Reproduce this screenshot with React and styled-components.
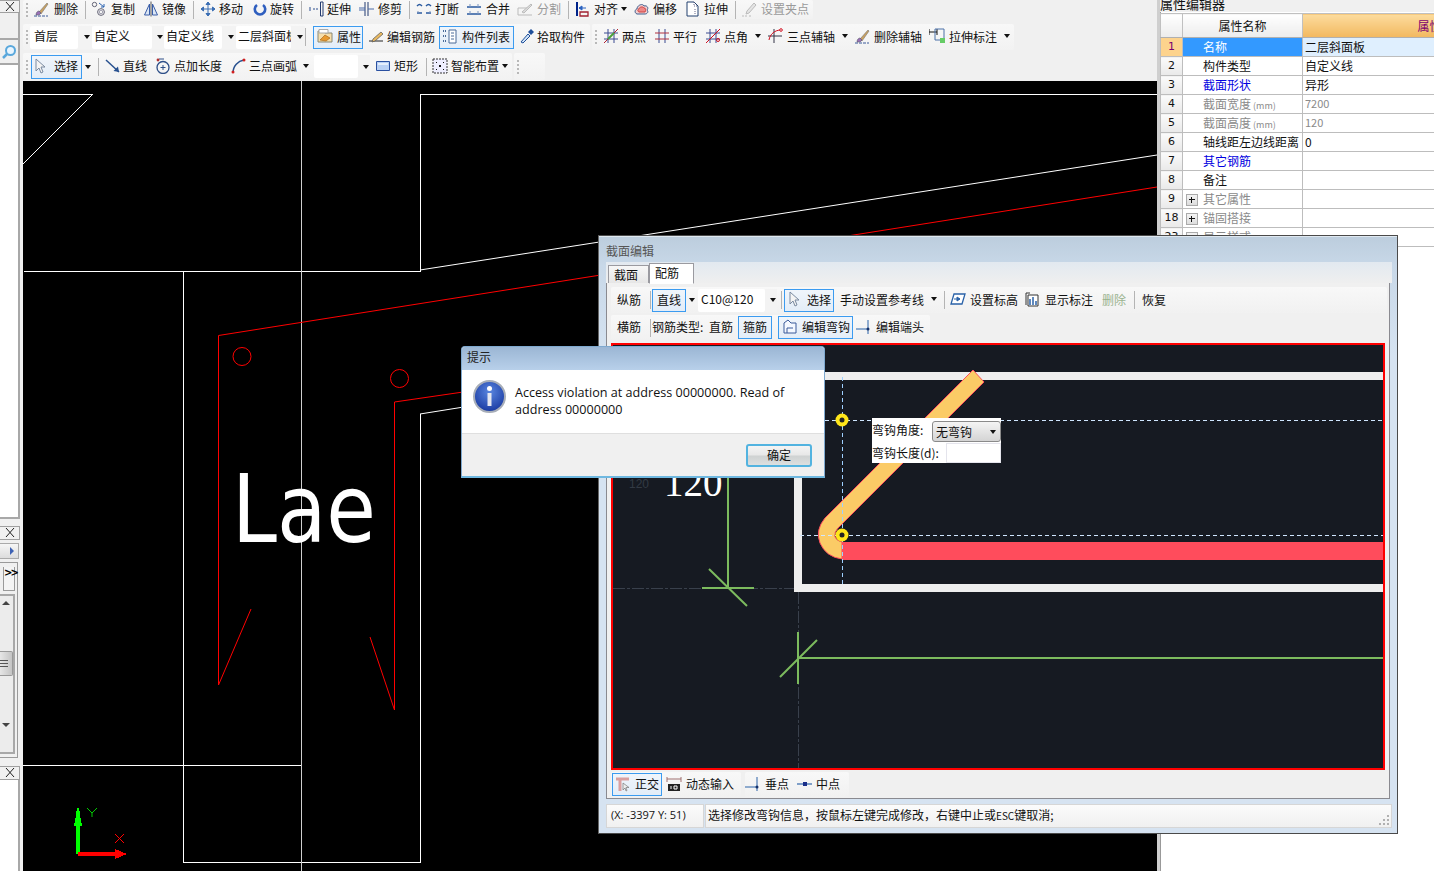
import React from "react";
import styled, { createGlobalStyle } from "styled-components";

const Global = createGlobalStyle`
  html, body { margin: 0; padding: 0; background: #f0f0f0; overflow: hidden; }
  body { font-family: "Noto Sans CJK SC", "Liberation Sans", sans-serif; font-size: 12px; color: #111; }
  * { box-sizing: border-box; }
`;

const Page = styled.div`
  position: relative; width: 1434px; height: 871px; display: flex; overflow: hidden; background: #f0f0f0;
`;

/* ---------- left dock strip ---------- */
const LeftStrip = styled.aside`
  width: 23px; flex: none; display: flex; flex-direction: column; background: #f0f0f0;
`;
const StripPane = styled.div`
  width: 20px; flex: none; height: ${p => p.$h}px; margin-top: ${p => p.$mt || 0}px;
  background: ${p => p.$bg || "#fff"}; border-right: 2px solid #a8a8a8;
  border-bottom: ${p => (p.$line ? "2px solid #a8a8a8" : "0")};
  display: flex; align-items: center; justify-content: center;
`;
const CloseBtn = styled.div`
  width: 20px; height: ${p => p.$h || 14}px; flex: none; margin-top: ${p => p.$mt || 0}px;
  border: 1px solid #a0a0a0; border-left: 0; background: #f1f1f1;
  display: flex; align-items: center; justify-content: center;
`;
const ArrowBtn = styled.div`
  width: 19px; height: 16px; flex: none; margin-top: 3px; background: linear-gradient(#f6f6f6, #dcdcdc);
  border: 1px solid #aaa; border-left: 0; display: flex; align-items: center; justify-content: flex-end; padding-right: 4px;
  &::after { content: ""; border-left: 4px solid #3e62b4; border-top: 4px solid transparent; border-bottom: 4px solid transparent; }
`;
const ScrollDock = styled.div`
  width: 18px; height: 196px; flex: none; margin-top: 3px; border: 1px solid #9a9a9a; border-left: 0;
  background: #f0f0f0; display: flex; flex-direction: column; padding: 4px 2px 3px 0;
`;
const MoreBtn = styled.div`
  width: 12px; height: 24px; margin-left: 3px; flex: none; border: 1px solid #9a9a9a; border-top: 0; background: #f4f4f4;
  font: 700 10px/12px "DejaVu Sans", sans-serif; letter-spacing: -2px; color: #000; text-align: center;
`;
const ScrollTrack = styled.div`
  flex: 1; margin-top: 3px; border: 2px solid #a8a8a8; border-left: 0; background: #ececec;
  display: flex; flex-direction: column; align-items: center; position: relative;
`;
const ScrollThumb = styled.div`
  position: absolute; top: 55px; left: 0; width: 13px; height: 25px; border: 1px solid #999; border-left: 0; border-radius: 0 2px 2px 0;
  background: linear-gradient(90deg, #e6e6e6, #c4c4c4);
  display: flex; flex-direction: column; gap: 2px; justify-content: center; align-items: flex-start;
  i { display: block; width: 8px; height: 1px; background: #555; }
`;
const ScrollTri = styled.div`
  position: absolute; left: 2px; top: ${p => p.$top}px; width: 0; height: 0;
  border-left: 4px solid transparent; border-right: 4px solid transparent;
  ${p => (p.$up ? "border-bottom: 4px solid #444;" : "border-top: 4px solid #444;")}
`;

/* ---------- centre ---------- */
const Centre = styled.main`
  width: 1134px; flex: none; display: flex; flex-direction: column;
`;
const Toolbars = styled.div`
  height: 81px; flex: none; display: flex; flex-direction: column;
`;
const BarLine = styled.div`
  display: flex; gap: 2px; height: ${p => p.$h}px; margin-top: ${p => p.$mt || 0}px; flex: none;
`;
const Bar = styled.div`
  display: flex; align-items: center; height: 100%; width: ${p => (p.$w ? `${p.$w}px` : "auto")}; flex: none;
  background: linear-gradient(#f8f8f8, #f2f2f2); border-radius: 2px;
`;
const Grip = styled.div`
  width: ${p => p.$w}px; height: 14px; flex: none; position: relative;
  &::before { content: ""; position: absolute; left: ${p => p.$at || 3}px; top: 0; bottom: 0; border-left: 2px dotted #b8b8b8; }
`;
const Tool = styled.div`
  display: flex; align-items: center; flex: none; width: ${p => p.$w}px; height: 100%; white-space: nowrap; padding-bottom: 2px;
  color: ${p => (p.$muted ? "#9a9a9a" : "#111")};
`;
const IconSlot = styled.span`
  display: flex; flex: none; width: ${p => p.$w}px; align-items: center;
`;
const Glyph = styled.svg`
  display: block; width: 16px; height: 16px; flex: none;
`;
const Caret = styled.span`
  flex: none; width: 0; height: 0; margin-left: ${p => p.$ml || 3}px; margin-right: ${p => p.$mr || 0}px;
  border-left: 3px solid transparent; border-right: 3px solid transparent; border-top: 4px solid #111;
`;
const Sep = styled.div`
  flex: none; width: ${p => p.$w}px; height: 18px; position: relative;
  &::before { content: ""; position: absolute; left: 0; top: 0; bottom: 0; width: 1px; background: #b4b4b4; }
`;
const ActiveBtn = styled.button`
  display: flex; align-items: center; flex: none; width: ${p => p.$w}px; height: ${p => p.$h || 23}px; padding: 0 0 2px ${p => p.$pl ?? 4}px;
  margin: 0 ${p => p.$mr || 0}px 0 ${p => p.$ml || 0}px; font: inherit; color: #111; white-space: nowrap; overflow: hidden;
  background: linear-gradient(#f0f5fb, #e3edf8); border: 1px solid #3b9bf0; border-radius: 0;
`;
const SelectBox = styled.div`
  display: flex; align-items: center; flex: none; width: ${p => p.$w}px; height: 23px; padding-right: 0; margin-right: ${p => p.$mr || 0}px;
`;
const SelectText = styled.div`
  flex: none; width: ${p => p.$w}px; height: 100%; background: #fff; padding-left: ${p => p.$pl ?? 3}px; line-height: 20px;
  overflow: hidden; white-space: nowrap; border-radius: 2px;
`;
const SelectCaret = styled.div`
  flex: 1; height: 100%; display: flex; align-items: center; justify-content: center; background: #f3f3f3;
`;

const Canvas = styled.div`
  flex: 1; background: #000; position: relative; overflow: hidden;
`;
const Cad = styled.svg`
  display: block; width: 100%; height: 100%;
`;

/* ---------- property panel ---------- */
const Panel = styled.aside`
  width: 277px; flex: none; background: #fff; border-left: 3px solid #cfcfcf; overflow: hidden; position: relative;
  box-shadow: inset 1px 0 0 #999;
`;
const PanelHead = styled.div`
  height: 12px; margin-left: 0; background: #f0f0f0; font-size: 13px; line-height: 8px; color: #111; padding-left: 0; white-space: nowrap; overflow: hidden;
`;
const PropTable = styled.table`
  border-collapse: collapse; table-layout: fixed; width: 409px; margin: 1px 0 0 0; border: 1px solid #a4a4a4; font-size: 12px;
`;
const Th = styled.th`
  height: 24px; padding: 0; font-weight: 400; width: ${p => (p.$w ? `${p.$w}px` : "auto")};
  border: 1px solid #c0c0c0; border-bottom-color: #b0b0b0;
  background: ${p => (p.$hot ? "linear-gradient(#fcdc9e, #f2b85f)" : "linear-gradient(#fff, #ececec)")};
  color: ${p => (p.$hot ? "#7a0070" : "#111")};
`;
const Tr = styled.tr` height: 19px; `;
const CellFit = styled.div`
  height: 18px; line-height: 17px; overflow: hidden;
`;
const IndexCell = styled.td`
  padding: 0; text-align: center; border: 1px solid #bdbdbd; font: 11px/17px "DejaVu Sans", sans-serif;
  background: ${p => (p.$on ? "#fdd38d" : "linear-gradient(#fbfbfb, #e9e9e9)")}; color: ${p => (p.$on ? "#7a0070" : "#111")};
`;
const NameCell = styled.td`
  padding: 0 0 0 ${p => (p.$exp ? 3 : 20)}px; border: 1px solid #bdbdbd; white-space: nowrap; overflow: hidden;
  background: ${p => (p.$on ? "#3399ff" : "#fff")};
  color: ${p => (p.$on ? "#fff" : p.$tone === "blue" ? "#0000e0" : p.$tone === "grey" ? "#8a8a8a" : "#111")};
`;
const ValueCell = styled.td`
  padding: 0 0 0 2px; border: 1px solid #bdbdbd; white-space: nowrap;
  font-size: ${p => (p.$tone === "grey" ? "11px" : "12px")};
  background: ${p => (p.$on ? "#dfeffe" : "#fff")}; color: ${p => (p.$tone === "grey" ? "#8a8a8a" : "#111")};
`;
const Unit = styled.span` font-size: 9px; margin-left: 2px; `;
const ExpandBox = styled.span`
  display: inline-block; width: 12px; height: 12px; margin-right: 5px; vertical-align: -2px;
  border: 1px solid #aaa; background: linear-gradient(#f4f4f4, #ddd); position: relative;
  &::before { content: ""; position: absolute; left: 2px; right: 2px; top: 4px; height: 1px; background: #111; }
  &::after { content: ""; position: absolute; top: 2px; bottom: 2px; left: 4px; width: 1px; background: #111; }
`;

/* ---------- section editor window ---------- */
const SectionWindow = styled.section`
  position: absolute; left: 598px; top: 235px; width: 800px; height: 599px; display: flex; flex-direction: column;
  background: linear-gradient(#bccddd 0, #c8d8e8 30px, #d6e3f1 120px); border: 1px solid #4a4a4a; border-left-color: #666; padding: 0 7px 6px 7px;
  box-shadow: inset 0 1px 0 #dfe8f0;
`;
const WinTitle = styled.div`
  height: 26px; flex: none; line-height: 30px; color: #555; font-size: 12px;
`;
const TabStrip = styled.div`
  height: 21px; flex: none; display: flex; align-items: flex-end; padding-left: 2px; background: linear-gradient(#e2e9f0, #efefef); position: relative; z-index: 1; margin-right: -2px;
`;
const Tab = styled.div`
  width: ${p => p.$w}px; height: ${p => (p.$on ? 21 : 18)}px; line-height: ${p => (p.$on ? 17 : 17)}px; padding-left: 5px; flex: none;
  background: ${p => (p.$on ? "#fff" : "linear-gradient(#f7f7f7, #e6e6e6)")};
  border: 1px solid #9a9aa0; border-bottom: ${p => (p.$on ? "1px solid #fff" : "0")}; margin-bottom: ${p => (p.$on ? -1 : 0)}px;
`;
const TabBody = styled.div`
  height: 517px; flex: none; margin-top: -1px; border: 1px solid #8a8a90; background: #f0f0f0; padding: 4px 2px 0 4px; display: flex; flex-direction: column;
`;
const WinBar = styled.div`
  display: flex; align-items: center; height: ${p => p.$h}px; flex: none; width: ${p => (p.$w ? `${p.$w}px` : "auto")};
  background: linear-gradient(#f8f8f8, #f1f1f1); border-radius: 2px; margin-top: ${p => p.$mt || 0}px;
`;
const Spacer = styled.div` flex: none; width: ${p => p.$w}px; `;
const PlainLabel = styled.span`
  flex: none; width: ${p => p.$w}px; white-space: nowrap; padding-bottom: 2px; color: ${p => (p.$tone === "green" ? "#9ab38f" : "#111")};
`;
const RebarCanvas = styled.div`
  position: relative; width: 774px; height: 427px; flex: none; margin-top: 3px; border: 2px solid #f00; background: #161a22;
`;
const RebarSvg = styled.svg` display: block; width: 770px; height: 423px; `;
const HookPopup = styled.div`
  position: absolute; left: 259px; top: 73px; width: 129px; height: 45px; background: #fff; display: grid; grid-template-rows: 24px 21px; font-size: 12px;
`;
const PopRow = styled.div`
  display: flex; align-items: center; justify-content: space-between; white-space: nowrap; line-height: 20px;
`;
const PopSelect = styled.div`
  width: 69px; height: 21px; margin-top: 3px; border: 1px solid #8a8a8a; border-radius: 3px; background: linear-gradient(#f4f4f4, #d4d4d4);
  display: flex; align-items: center; justify-content: space-between; padding: 0 4px 0 3px;
`;
const PopInput = styled.div`
  width: 55px; height: 20px; background: #fff; border: 1px solid #e4e4ec;
`;
const WinFoot = styled.div`
  display: flex; gap: 4px; height: 25px; flex: none; margin-top: 2px;
`;
const StatusLine = styled.div`
  display: flex; gap: 1px; height: 24px; flex: none; margin-top: 5px; margin-right: -2px;
`;
const StatusCell = styled.div`
  position: relative; flex: ${p => (p.$grow ? 1 : "none")}; width: ${p => (p.$w ? `${p.$w}px` : "auto")}; border: 1px solid #d6d6d6; background: linear-gradient(#fbfbfb, #f0f0f0);
  padding-left: ${p => p.$pl}px; line-height: 20px; white-space: nowrap; font-size: ${p => p.$fs || 12}px;
  font-family: ${p => (p.$latin ? '"Open Sans", "Liberation Sans", sans-serif' : "inherit")};
`;
const SmallCaps = styled.span` font-size: 10px; `;
const ResizeDots = styled.svg`
  position: absolute; right: 1px; bottom: 1px; width: 12px; height: 12px;
`;

/* ---------- alert ---------- */
const Alert = styled.section`
  position: absolute; left: 461px; top: 346px; width: 364px; height: 132px; display: flex; flex-direction: column;
  border: 1px solid #7fa9cf; border-bottom: 2px solid #6fb8e0; border-radius: 4px 4px 0 0; background: #f0f0f0; overflow: hidden;
`;
const AlertTitle = styled.div`
  height: 23px; flex: none; background: linear-gradient(#9bb6d4, #b8d0ea); padding-left: 5px; line-height: 20px; color: #222;
`;
const AlertBody = styled.div`
  height: 64px; flex: none; background: #fff; border-bottom: 1px solid #dfdfdf; display: flex; gap: 9px; padding: 10px 30px 0 11px;
`;
const AlertText = styled.p`
  margin: 4px 0 0; font: 12.6px/17px "Open Sans", "Liberation Sans", sans-serif; color: #111;
`;
const AlertFoot = styled.div`
  flex: 1; display: flex; justify-content: flex-end; padding: 10px 12px 0 0;
`;
const OkButton = styled.button`
  width: 66px; height: 23px; border: 2px solid #52b3e0; border-radius: 3px; background: linear-gradient(#f4f4f4 0, #e8e8e8 48%, #cfd2d2 52%, #dcdfdf 100%);
  font: inherit; color: #111; padding: 0 0 2px; line-height: 16px;
`;

/* ---------- icons ---------- */
const paths = {
  brush: <><path d="M1 15h14" stroke="#3a5a9a" strokeWidth="1" strokeDasharray="3 1" /><path d="M6 11 14 2l1 1-7 10z" fill="#c9a060" stroke="#777" strokeWidth=".6" /><path d="M3 14c0-3 2-4 3-4l2 2c-1 2-3 2-5 2z" fill="#9a70b8" stroke="#556" strokeWidth=".6" /></>,
  copy: <><circle cx="3.5" cy="3.5" r="2.2" fill="none" stroke="#667" /><circle cx="10" cy="11" r="3.4" fill="none" stroke="#667" /><circle cx="10" cy="11" r="1.8" fill="none" stroke="#99a" /><path d="M8 2l5 4M13 3v3h-3" fill="none" stroke="#2a62b0" /></>,
  mirror: <><path d="M8 .5v15" stroke="#555" /><path d="M6.5 3 1.5 14h5zM9.5 3l5 11h-5z" fill="#dbe6f5" stroke="#3a5ea8" /></>,
  move: <path d="M8 1v14M1 8h14M8 1 6 3.5h4zM8 15l-2-2.5h4zM1 8l2.5-2v4zM15 8l-2.5-2v4z" fill="#3a6eb4" stroke="#3a6eb4" />,
  rotate: <path d="M5 4a5.2 5.2 0 1 0 6 0" fill="none" stroke="#2f5fbf" strokeWidth="2.6" />,
  extend: <><path d="M1 7h2M1 9h2M5 8h6" stroke="#2d4f90" strokeDasharray="2 1" /><path d="M12.500 1v14M15 1v14M12.500 1H15M12.500 15H15" stroke="#223a70" fill="none" /></>,
  trim: <><path d="M6 1v14M9 1v14" stroke="#223a70" /><path d="M0 7h6M0 9h6M9 8h6" stroke="#4a6aa8" /></>,
  breakAt: <><path d="M1 5c2-2 3-2 5 0M10 5c2-2 3-2 5 0M1 12h5M10 12h5" stroke="#2a5aa0" strokeWidth="1.5" fill="none" /><path d="M2 10v2M14 10v2" stroke="#7b94bf" /></>,
  merge: <><path d="M1 6h14M1 13h14" stroke="#2a5aa0" strokeWidth="1.5" /><path d="M4 3v3M12 3v3M4 10v3M12 10v3" stroke="#7b94bf" /></>,
  split: <><path d="M1 14h14M1 14V7h11" stroke="#bbb" fill="none" /><path d="M5 11 14 3l1 1-8 8z" fill="#ddd" stroke="#bbb" /></>,
  align: <><path d="M2 1v14" stroke="#00238a" strokeWidth="2" /><path d="M5 11h8v4H5z" fill="none" stroke="#a02030" strokeWidth="1.3" /><path d="M4 7h7M4 7l3-2v4z" fill="#2a62c0" stroke="#2a62c0" /></>,
  offset: <><path d="M3 13c-3-1-2-5 0-5 0-4 6-6 7-3 3-1 5 2 3 4 2 2 0 4-2 4z" fill="#f2d0d0" stroke="#406090" /><path d="M5 11c-2-1-1-3 0-3 0-2 4-3 5-1 2 0 2 2 1 4z" fill="#e88" stroke="#c44" /></>,
  stretch: <><path d="M2 1h7l4 4v10H2z" fill="#fff" stroke="#22406e" /><path d="M9 1v4h4M10 8v5" stroke="#668" strokeDasharray="1 1" fill="none" /></>,
  pen: <><path d="M1 15h5M8 15h2" stroke="#bbb" strokeDasharray="2 1" /><path d="M6 10 13 2l2 2-7 8-3 1z" fill="#e4e4e4" stroke="#bbb" /></>,
  prop: <><path d="M1 3h6l1 2h7v9H1z" fill="#f7deaa" stroke="#887" /><path d="M2 1.500h9V5H2z" fill="#fff" stroke="#aaa" /><path d="M3 12 8 7l5 3-4 3z" fill="#e89a30" stroke="#a26010" strokeWidth=".6" /></>,
  editBar: <><path d="M1 13h14" stroke="#222" /><path d="M5 11 13 4l2 2-8 7-3 1z" fill="#e8b860" stroke="#555" strokeWidth=".7" /></>,
  list: <><path d="M8 2h7v13H8z" fill="#fff" stroke="#4a6a98" /><path d="M10 5h3M10 8h3M10 11h3" stroke="#4a6a98" /><path d="M2 3h3M2 8h3M2 13h3" stroke="#4a6a98" strokeWidth="2" strokeDasharray="1 1" /></>,
  dropper: <><path d="M2 14 9 6l2 2-7 7z" fill="#cfe2f7" stroke="#1f4f9a" /><path d="M9 4l3-3 3 3-3 3z" fill="#1f4f9a" /></>,
  twoPt: <><path d="M5 1v14M11 1v14M1 5h14M1 11h14" stroke="#3a4a90" /><path d="M1 15 15 1" stroke="#b02030" /><path d="M5 11l6-6" stroke="#4aa038" strokeWidth="2" /></>,
  parallel: <><path d="M5 1v14M11 1v14" stroke="#3a4a90" /><path d="M1 5h14M1 11h14" stroke="#b03040" /></>,
  corner: <><path d="M5 1v14M11 1v14M1 5h14M1 11h14" stroke="#3a4a90" /><path d="M1 15 15 1" stroke="#d01020" /><circle cx="13" cy="12" r="1.500" fill="none" stroke="#d01020" /></>,
  arcAxis: <><path d="M7 1v14M1 8h14" stroke="#334" /><path d="M2 12C3 6 8 2 14 2" fill="none" stroke="#d01020" /><circle cx="14" cy="2" r="1.300" fill="#fff" stroke="#d01020" /></>,
  dim: <><path d="M0 4h8M0 1v6M8 1v6" stroke="#111" /><path d="M6 1h9v11H6z" fill="none" stroke="#4a70a8" /><path d="M11 10h5v5h-5z" fill="#66cc66" /></>,
  cursor: <path d="M4 1v12l3-3 2 5 2-1-2-5h4z" fill="#f4f4f4" stroke="#7a8aa0" />,
  line: <><path d="M1 2 14 14" stroke="#27508f" strokeWidth="1.500" /><path d="M14 14 8.500 13 13 8.500z" fill="#27508f" /></>,
  lenPlus: <><circle cx="8" cy="9.500" r="6" fill="none" stroke="#2e4f88" strokeWidth="1.300" /><path d="M8 7v5M5.500 9.500h5M4 1h5" stroke="#2e4f88" /><circle cx="3" cy="2" r="1.400" fill="#b03030" /></>,
  arc: <><path d="M2 15C2 8 7 3 13 2" fill="none" stroke="#27508f" strokeWidth="1.500" /><circle cx="2" cy="14" r="1.500" fill="#d02020" /><circle cx="13" cy="2" r="1.500" fill="#d02020" /></>,
  rect: <><path d="M1.500 3.500h13v9h-13z" fill="#b8d0f4" stroke="#2a50a0" /><path d="M3 5h10v2H3z" fill="#e4eefc" /></>,
  smart: <><path d="M1 1h14v14H1z" fill="#eef" stroke="#333" strokeDasharray="2 1" /><path d="M4 4h1v1H4zM11 4h1v1h-1zM4 11h1v1H4zM11 11h1v1h-1zM7 7h2v2H7z" fill="#111" /></>,
  level: <><path d="M4 3h11l-3 10H1z" fill="#fff" stroke="#2a62a8" strokeWidth="1.300" /><path d="M4 8h6M10 8 7 6v4z" fill="#2a62a8" stroke="#2a62a8" /></>,
  label: <><path d="M3 4h10v11H3z" fill="#fff" stroke="#333" /><path d="M5 8v6M8 6v8M11 10v4" stroke="#2a62a8" strokeWidth="1.500" /><path d="M1 14V2M1 2h4" stroke="#333" /></>,
  hook: <><path d="M2 14V4l4-3 3 3h5v10z" fill="#f4f8ff" stroke="#3a5a9a" /><path d="M5 14V9h6" fill="none" stroke="#3a5a9a" /></>,
  endHead: <><path d="M0 10h12M12 1v14" stroke="#2a62a8" /><circle cx="12" cy="10" r="1.500" fill="#14306a" /></>,
  ortho: <><path d="M1 3h13M5 3v12" stroke="#dba0a0" strokeWidth="3" /><path d="M8 7v7l2-2 1 3 1-.5-1-3h3z" fill="#eee" stroke="#777" strokeWidth=".7" /></>,
  dynInput: <><path d="M1 1v5M15 1v5M1 3h14" stroke="#a07070" /><path d="M2 8h12v7H2z" fill="#222" /><path d="M5 10v3M8 10h3v3H8z" stroke="#fff" fill="none" /></>,
  foot: <><path d="M0 11h12M12 1v14" stroke="#2a62a8" /><circle cx="12" cy="11" r="1.500" fill="#14306a" /></>,
  mid: <><path d="M0 8h15" stroke="#7f9fc8" strokeWidth="2" /><path d="M6 6h4v4H6z" fill="#1a2f8a" /></>,
  close: <path d="M4 3l8 9M12 3l-8 9" stroke="#222" />,
  lens: <><circle cx="9.500" cy="6.500" r="4.500" fill="#e8f5ff" stroke="#5aa8dc" strokeWidth="2" /><path d="M6 10l-4 4" stroke="#5aa8dc" strokeWidth="2.500" /></>,
};

const Ico = ({ n }) => <Glyph viewBox="0 0 16 16">{paths[n]}</Glyph>;

const Item = ({ i, t, iw, w, muted, caret }) => (
  <Tool $w={w} $muted={muted}>
    <IconSlot $w={iw}><Ico n={i} /></IconSlot>
    {t}
    {caret ? <Caret $ml={caret} /> : null}
  </Tool>
);

const Active = ({ i, t, w, gap = 5, pl = 4, ...rest }) => (
  <ActiveBtn $w={w} $pl={pl} {...rest}>
    {i ? <IconSlot $w={16 + gap}><Ico n={i} /></IconSlot> : null}
    {t}
  </ActiveBtn>
);

const Select = ({ t, w, tw, pl, mr }) => (
  <SelectBox $w={w} $mr={mr}>
    <SelectText $w={tw} $pl={pl}>{t}</SelectText>
    <SelectCaret><Caret $ml={0} /></SelectCaret>
  </SelectBox>
);

const row1 = [
  ["brush", "删除", 21, 52], 0, ["copy", "复制", 20, 52], ["mirror", "镜像", 19, 50], 1,
  ["move", "移动", 19, 52], ["rotate", "旋转", 18, 49], 1, ["extend", "延伸", 19, 51], ["trim", "修剪", 19, 50], 1,
  ["breakAt", "打断", 19, 50], ["merge", "合并", 20, 51],
];

const rows = [
  { n: 1, name: "名称", val: "二层斜面板", on: true },
  { n: 2, name: "构件类型", val: "自定义线" },
  { n: 3, name: "截面形状", val: "异形", tone: "blue" },
  { n: 4, name: "截面宽度", val: "7200", tone: "grey", unit: true },
  { n: 5, name: "截面高度", val: "120", tone: "grey", unit: true },
  { n: 6, name: "轴线距左边线距离", val: "0" },
  { n: 7, name: "其它钢筋", tone: "blue" },
  { n: 8, name: "备注" },
  { n: 9, name: "其它属性", tone: "grey", exp: true },
  { n: 18, name: "锚固搭接", tone: "grey", exp: true },
  { n: 23, name: "显示样式", tone: "grey", exp: true },
];

export default function App() {
  return (
    <Page>
      <Global />
      <LeftStrip>
        <CloseBtn $h={13}><Ico n="close" /></CloseBtn>
        <StripPane $h={27} $bg="#f0f0f0" $line />
        <StripPane $h={25} $bg="#f0f0f0" $line><Ico n="lens" /></StripPane>
        <StripPane $h={454} $line />
        <CloseBtn $mt={7}><Ico n="close" /></CloseBtn>
        <ArrowBtn />
        <ScrollDock>
          <MoreBtn>&gt;&gt;</MoreBtn>
          <ScrollTrack>
            <ScrollTri $up $top={5} />
            <ScrollThumb><i /><i /><i /></ScrollThumb>
            <ScrollTri $top={127} />
          </ScrollTrack>
        </ScrollDock>
        <CloseBtn $mt={8}><Ico n="close" /></CloseBtn>
        <StripPane $h={91} />
      </LeftStrip>

      <Centre>
        <Toolbars>
          <BarLine $h={19}>
            <Bar $w={790}>
              <Grip $w={10} $at={3} />
              {row1.map((r, k) =>
                typeof r === "number"
                  ? <Sep key={k} $w={r === 0 ? 6 : 7} />
                  : <Item key={k} i={r[0]} t={r[1]} iw={r[2]} w={r[3]} />
              )}
              <Item i="split" t="分割" iw={20} w={51} muted />
              <Sep $w={7} />
              <Item i="align" t="对齐" iw={19} w={59} caret={3} />
              <Item i="offset" t="偏移" iw={19} w={51} />
              <Item i="stretch" t="拉伸" iw={19} w={50} />
              <Sep $w={6} />
              <Item i="pen" t="设置夹点" iw={20} w={72} muted />
            </Bar>
          </BarLine>
          <BarLine $h={26} $mt={5}>
            <Bar $w={567}>
              <Grip $w={7} $at={3} />
              <Select t="首层" w={62} tw={48} pl={4} />
              <Select t="自定义" w={72} tw={60} pl={2} />
              <Select t="自定义线" w={72} tw={58} pl={2} />
              <Select t="二层斜面板" w={69} tw={55} pl={2} />
              <Sep $w={8} />
              <Active i="prop" t="属性" w={50} gap={4} pl={3} />
              <Spacer $w={5} />
              <Item i="editBar" t="编辑钢筋" iw={19} w={71} />
              <Active i="list" t="构件列表" w={75} gap={5} pl={1} />
              <Spacer $w={5} />
              <Item i="dropper" t="拾取构件" iw={18} w={66} />
            </Bar>
            <Bar $w={422}>
              <Grip $w={11} $at={3} />
              <Item i="twoPt" t="两点" iw={19} w={51} />
              <Item i="parallel" t="平行" iw={19} w={51} />
              <Item i="corner" t="点角" iw={19} w={62} caret={7} />
              <Item i="arcAxis" t="三点辅轴" iw={20} w={87} caret={7} />
              <Item i="brush" t="删除辅轴" iw={20} w={75} />
              <Item i="dim" t="拉伸标注" iw={20} w={85} caret={7} />
            </Bar>
          </BarLine>
          <BarLine $h={27} $mt={3}>
            <Bar $w={489}>
              <Grip $w={8} $at={3} />
              <Active i="cursor" t="选择" w={51} gap={6} pl={0} $h={24} />
              <Caret $ml={3} $mr={7} />
              <Sep $w={7} />
              <Item i="line" t="直线" iw={18} w={50} />
              <Item i="lenPlus" t="点加长度" iw={19} w={76} />
              <Item i="arc" t="三点画弧" iw={18} w={83} caret={6} />
              <Select t="" w={56} tw={44} />
              <Spacer $w={5} />
              <Item i="rect" t="矩形" iw={19} w={51} />
              <Sep $w={6} />
              <Item i="smart" t="智能布置" iw={19} w={80} caret={3} />
            </Bar>
            <Bar $w={31}>
              <Grip $w={10} $at={3} />
            </Bar>
          </BarLine>
        </Toolbars>
        <Canvas>
          <Cad viewBox="23 81 1134 790" shapeRendering="crispEdges">
            <g fill="none" stroke="#fff" strokeWidth="1">
              <path d="M23 94.500H93" />
              <path d="M93 94 23 164" shapeRendering="auto" />
              <path d="M23.500 271.500H420.500V94.500H1157" />
              <path d="M420 270 1157 155" shapeRendering="auto" />
              <path d="M183.500 271V862.500H420.500V414" />
              <path d="M420 414 470 406" shapeRendering="auto" />
              <path d="M23 765.500H301" />
              <path d="M301.500 81V871" stroke="#cfcfcf" />
            </g>
            <g fill="none" stroke="#f00" strokeWidth="1" shapeRendering="auto">
              <path d="M218.500 685V335.500L1157 187" />
              <path d="M218.500 685 251 609" />
              <circle cx="242" cy="356.500" r="9" />
              <circle cx="399.500" cy="378.500" r="9" />
              <path d="M394.500 710V402L470 391" />
              <path d="M394.500 710 370 637" />
            </g>
            <text x="232" y="542" fill="#fff" fontFamily="'DejaVu Sans', sans-serif" fontSize="95" fontStretch="condensed" textLength="144" lengthAdjust="spacingAndGlyphs" shapeRendering="auto">Lae</text>
            <path d="M78 854V811" stroke="#0f0" strokeWidth="4" />
            <path d="M78 805 74 826H82z" fill="#0f0" />
            <path d="M78 854H120" stroke="#f00" strokeWidth="4" />
            <path d="M127 854 115 849V859z" fill="#f00" />
            <g shapeRendering="auto" fill="none">
              <path d="M87 808 92 813 97 808M92 813V817" stroke="#0c0" />
              <path d="M115 834 124 843M124 834 115 843" stroke="#f00" />
            </g>
          </Cad>
        </Canvas>
      </Centre>

      <Panel>
        <PanelHead>属性编辑器</PanelHead>
        <PropTable>
          <thead>
            <tr>
              <Th $w={22} />
              <Th $w={120}>属性名称</Th>
              <Th $hot>属性值</Th>
            </tr>
          </thead>
          <tbody>
            {rows.map(r => (
              <Tr key={r.n}>
                <IndexCell $on={r.on}><CellFit>{r.n}</CellFit></IndexCell>
                <NameCell $on={r.on} $tone={r.tone} $exp={r.exp}>
                  <CellFit>
                    {r.exp ? <ExpandBox /> : null}
                    {r.name}
                    {r.unit ? <Unit>(mm)</Unit> : null}
                  </CellFit>
                </NameCell>
                <ValueCell $on={r.on} $tone={r.tone === "grey" ? "grey" : undefined}><CellFit>{r.val}</CellFit></ValueCell>
              </Tr>
            ))}
          </tbody>
        </PropTable>
      </Panel>

      <SectionWindow>
        <WinTitle>截面编辑</WinTitle>
        <TabStrip>
          <Tab $w={41}>截面</Tab>
          <Tab $on $w={45}>配筋</Tab>
        </TabStrip>
        <TabBody>
          <WinBar $h={26}>
            <Spacer $w={6} />
            <PlainLabel $w={33}>纵筋</PlainLabel>
            <Sep $w={2} />
            <Active t="直线" w={34} pl={4} />
            <Caret $ml={3} $mr={3} />
            <SelectBox $w={79}>
              <SelectText $w={67}>C10@120</SelectText>
              <SelectCaret><Caret $ml={0} /></SelectCaret>
            </SelectBox>
            <Spacer $w={4} />
            <Sep $w={3} />
            <Active i="cursor" t="选择" w={50} gap={5} pl={1} />
            <Spacer $w={6} />
            <Tool $w={104}>手动设置参考线<Caret $ml={7} /></Tool>
            <Sep $w={6} />
            <Item i="level" t="设置标高" iw={20} w={75} />
            <Item i="label" t="显示标注" iw={20} w={77} />
            <PlainLabel $w={32} $tone="green">删除</PlainLabel>
            <Sep $w={8} />
            <PlainLabel $w={30}>恢复</PlainLabel>
            <Spacer $w={2} />
          </WinBar>
          <WinBar $h={25} $mt={2} $w={319}>
            <Spacer $w={6} />
            <PlainLabel $w={33}>横筋</PlainLabel>
            <Sep $w={2} />
            <PlainLabel $w={57}>钢筋类型:</PlainLabel>
            <PlainLabel $w={29}>直筋</PlainLabel>
            <Active t="箍筋" w={34} pl={4} />
            <Spacer $w={6} />
            <Active i="hook" t="编辑弯钩" w={75} gap={4} pl={3} $ml={0} />
            <Spacer $w={3} />
            <Item i="endHead" t="编辑端头" iw={20} w={65} />
          </WinBar>
          <RebarCanvas>
            <RebarSvg viewBox="613 345 770 423">
              <g fill="none" strokeWidth="1" strokeDasharray="12 2 3 2" stroke="#39404c">
                <path d="M613 588.500H794" />
                <path d="M798.500 592V768" />
              </g>
              <g fill="#eeeeee">
                <path d="M794 372H1383V380H802V584H1383V592H794z" />
              </g>
              <path d="M842 542H1383V560H842z" fill="#ff4c5c" />
              <path d="M973 370 984 382 838 528Q834 532 835 537Q837 541 842 542V559Q826 557 820 543Q815 530 825 518z" fill="#fbcb66" stroke="#ff4c5c" strokeWidth="1" />
              <g fill="none" stroke="#9fd0ff" strokeWidth="1" strokeDasharray="4 3">
                <path d="M842.500 377V587" />
                <path d="M800 535.500H1383" stroke="#cfe6ff" />
                <path d="M804 420.500H1383" stroke="#cfe6ff" />
              </g>
              {[420, 535].map(y => (
                <g key={y}>
                  <circle cx="842" cy={y} r="6.500" fill="#ffe61a" />
                  <circle cx="842" cy={y} r="2.500" fill="#222" />
                </g>
              ))}
              <g stroke="#7cbb5e" strokeWidth="2" fill="none">
                <path d="M728 470V588M702 588H754M709 569 747 606" />
                <path d="M798 632V684M780 677 817 640M798 658H1383" />
              </g>
              <text x="629" y="488" fill="#333a44" fontSize="12" fontFamily="'Liberation Sans', sans-serif">120</text>
              <text x="664" y="496" fill="#fff" fontSize="39" fontFamily="'Liberation Serif', serif">120</text>
            </RebarSvg>
            <HookPopup>
              <PopRow>弯钩角度:
                <PopSelect>无弯钩<Caret $ml={0} /></PopSelect>
              </PopRow>
              <PopRow>弯钩长度(d):<PopInput /></PopRow>
            </HookPopup>
          </RebarCanvas>
          <WinFoot>
            <WinBar $h={25} $w={130}>
              <Spacer $w={1} />
              <Active i="ortho" t="正交" w={50} gap={4} pl={2} />
              <Spacer $w={4} />
              <Item i="dynInput" t="动态输入" iw={20} w={72} />
            </WinBar>
            <WinBar $h={25} $w={104}>
              <Item i="foot" t="垂点" iw={20} w={52} />
              <Item i="mid" t="中点" iw={19} w={48} />
            </WinBar>
          </WinFoot>
        </TabBody>
        <StatusLine>
          <StatusCell $w={98} $pl={4} $fs={11} $latin>(X: -3397 Y: 51)</StatusCell>
          <StatusCell $grow $pl={2}>
            选择修改弯钩信息，按鼠标左键完成修改，右键中止或<SmallCaps>ESC</SmallCaps>键取消;
            <ResizeDots viewBox="0 0 12 12">
              <path d="M9 1h2v2H9zM5 5h2v2H5zM9 5h2v2H9zM1 9h2v2H1zM5 9h2v2H5zM9 9h2v2H9z" fill="#b0b0b0" />
            </ResizeDots>
          </StatusCell>
        </StatusLine>
      </SectionWindow>

      <Alert>
        <AlertTitle>提示</AlertTitle>
        <AlertBody>
          <svg width="33" height="33" viewBox="0 0 33 33" style={{ flex: "none" }}>
            <defs>
              <radialGradient id="infoFill" cx="50%" cy="35%" r="70%">
                <stop offset="0" stopColor="#5a86e0" />
                <stop offset="1" stopColor="#14349c" />
              </radialGradient>
            </defs>
            <circle cx="16.500" cy="16.500" r="15.500" fill="url(#infoFill)" stroke="#a8aeb8" strokeWidth="2" />
            <circle cx="16.500" cy="8.500" r="2.500" fill="#fff" />
            <path d="M14.500 13h4v13h-4z" fill="#e6e8f0" />
          </svg>
          <AlertText>Access violation at address 00000000. Read of address 00000000</AlertText>
        </AlertBody>
        <AlertFoot>
          <OkButton>确定</OkButton>
        </AlertFoot>
      </Alert>
    </Page>
  );
}
